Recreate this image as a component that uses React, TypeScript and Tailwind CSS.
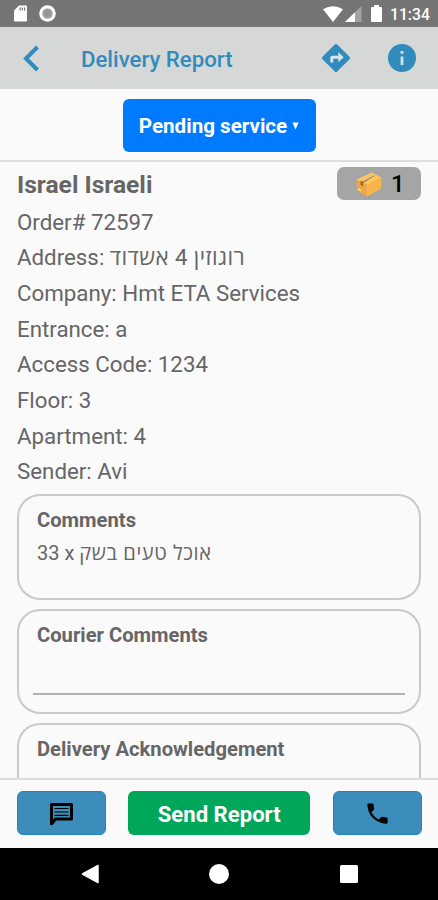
const rows = [
  { label: "Order#", value: "72597" },
  { label: "Address:", value: "רוגוזין 4 אשדוד", hebrew: true },
  { label: "Company:", value: "Hmt ETA Services" },
  { label: "Entrance:", value: "a" },
  { label: "Access Code:", value: "1234" },
  { label: "Floor:", value: "3" },
  { label: "Apartment:", value: "4" },
  { label: "Sender:", value: "Avi" },
];

function StatusBar() {
  return (
    <div className="flex h-[27px] shrink-0 items-center bg-[#757575] pr-[8px] pl-[14px] text-white">
      <svg width="13" height="17" viewBox="0 0 13 17">
        <path d="M5 0.5H12a1 1 0 0 1 1 1V15.500a1 1 0 0 1-1 1H1a1 1 0 0 1-1-1V5.500Z" fill="currentColor" />
        <path d="M5.500 2.500h1.200v3H5.500zM7.800 2.500H9v3H7.800zM10 2.500h1.200v3H10z" fill="#757575" />
      </svg>
      <svg className="ml-[12px]" width="17" height="17" viewBox="0 0 17 17">
        <circle cx="8.500" cy="8.500" r="8.300" fill="currentColor" />
        <circle cx="8.500" cy="8.500" r="5.300" fill="#a9a9a9" />
        <circle cx="8.500" cy="8.500" r="4" fill="#969696" />
      </svg>
      <svg className="ml-auto" width="20" height="16" viewBox="0 0 20 16">
        <path d="M0 3.300Q10-3 20 3.300L10 16Z" fill="currentColor" />
      </svg>
      <svg className="ml-[2px]" width="17" height="16" viewBox="0 0 17 16">
        <path d="M0 16L16.500 0V16Z" fill="#a3a3a3" />
        <path d="M0 16L10 6.300V16Z" fill="currentColor" />
      </svg>
      <svg className="ml-[9px]" width="11" height="17" viewBox="0 0 11 17">
        <path d="M3 0h5v2h2a1 1 0 0 1 1 1v13a1 1 0 0 1-1 1H1a1 1 0 0 1-1-1V3a1 1 0 0 1 1-1h2z" fill="currentColor" />
      </svg>
      <span className="mt-[2px] ml-[8px] w-[40px] text-[15.700px] leading-none font-medium whitespace-nowrap">11:34</span>
    </div>
  );
}

function Header() {
  return (
    <header className="flex h-[62px] shrink-0 items-center bg-[#d6d8d7] text-[#318bbd]">
      <svg className="ml-[23px]" width="17" height="27" viewBox="0 0 17 27" fill="none">
        <path d="M14.500 2L3 13.500L14.500 25" stroke="currentColor" strokeWidth="4" />
      </svg>
      <h1 className="mt-[4px] ml-[41px] text-[22.200px] font-medium">Delivery Report</h1>
      <svg className="mr-[38px] ml-auto" width="28" height="28" viewBox="0 0 28 28">
        <path d="M12.800 .5a1.700 1.700 0 0 1 2.400 0L27.500 12.800a1.700 1.700 0 0 1 0 2.400L15.200 27.500a1.700 1.700 0 0 1-2.400 0L.5 15.200a1.700 1.700 0 0 1 0-2.400Z" fill="currentColor" />
        <path d="M8.300 18.500v-5.200a1.500 1.500 0 0 1 1.500-1.500h6.500V8.200l5.400 5-5.400 5v-3.500h-5v3.800Z" fill="#d6e3e9" />
      </svg>
      <svg className="mr-[22px]" width="28" height="28" viewBox="0 0 28 28">
        <circle cx="14" cy="14" r="14" fill="currentColor" />
        <path d="M12.600 7h2.800v2.800h-2.800zM12.600 12.500h2.800v8.500h-2.800z" fill="#d6e3e9" />
      </svg>
    </header>
  );
}

function PackageIcon() {
  return (
    <svg width="26" height="25" viewBox="0 0 26 25">
      <path d="M.5 7.500L16 .5L25.500 5.500L10.500 12.800Z" fill="#ffc75a" />
      <path d="M.5 7.500L10.500 12.800L11 24.500L1 18.500Z" fill="#f2a63b" />
      <path d="M10.500 12.800L25.500 5.500L25 16.500L11 24.500Z" fill="#fbb448" />
      <path d="M4.500 9.500L16.500 3L18.500 4L7 11V14.500L4.500 13Z" fill="#9c682e" />
      <path d="M5 8.500L17.500 2L19.500 3L7 9.700Z" fill="#dec18b" />
      <path d="M2 16l3 1.600v1.600L2 17.500z" fill="#ffe0a0" />
    </svg>
  );
}

export default function App() {
  return (
    <div className="flex h-[900px] w-[438px] flex-col overflow-hidden bg-[#fafafa] font-[Roboto,'Open_Sans','Noto_Sans',sans-serif] text-[#666]">
      <StatusBar />
      <Header />
      <div className="flex h-[73px] shrink-0 items-center justify-center border-b-2 border-[#dcdedd]">
        <button className="mt-px flex h-[53px] w-[193px] items-center justify-center rounded-[6px] bg-[#007bff] pt-[2px] text-[20.600px] font-bold text-white">
          Pending service
          <svg className="ml-[5px]" width="7" height="8" viewBox="0 0 8 8">
            <path d="M.5 0h7L4 8z" fill="currentColor" />
          </svg>
        </button>
      </div>
      <main className="min-h-0 flex-1 overflow-hidden px-[17px]">
        <div className="flex h-[41.500px] justify-between pt-[5px]">
          <h2 className="mt-[3px] text-[24.600px] leading-[30px] font-bold">Israel Israeli</h2>
          <div className="flex h-[33px] w-[84px] items-center rounded-[7px] bg-[#a5a5a5] pt-px pl-[19px] text-[24px] font-medium text-black">
            <PackageIcon />
            <span className="ml-[9px]">1</span>
          </div>
        </div>
        {rows.map((row) => (
          <p key={row.label} className="h-[35.700px] text-[22.300px] leading-[36px] whitespace-nowrap">
            {row.label} <span className={row.hebrew ? "tracking-[0.420px]" : ""}>{row.value}</span>
          </p>
        ))}
        <section className="mt-[4.500px] h-[106px] rounded-[23px] border-2 border-[#c9c9c9] px-[18px] pt-[11px]">
          <h3 className="text-[20.200px] leading-[26px] font-bold">Comments</h3>
          <p className="mt-[7px] text-[20px] leading-[26px]">
            33 x <span className="tracking-[0.620px]">אוכל טעים בשק</span>
          </p>
        </section>
        <section className="mt-[9px] h-[105px] rounded-[23px] border-2 border-[#c9c9c9] px-[14px] pt-[11px]">
          <h3 className="px-[4px] text-[20.200px] leading-[26px] font-bold">Courier Comments</h3>
          <div className="mt-[45px] h-[2px] bg-[#b1b1b1]" />
        </section>
        <section className="mt-[9px] h-[106px] rounded-[23px] border-2 border-[#c9c9c9] px-[18px] pt-[11px]">
          <h3 className="text-[20.200px] leading-[26px] font-bold">Delivery Acknowledgement</h3>
        </section>
      </main>
      <footer className="flex h-[70px] shrink-0 justify-between border-t-2 border-[#dddddd] pr-[16.500px] pl-[17px] pt-[11px]">
        <button className="flex h-[44px] w-[89px] items-center justify-center rounded-[6px] border border-[#2085bb] bg-[#3c8dbc] text-black">
          <svg width="23" height="23" viewBox="0 0 23 23">
            <path d="M1.500 22V2.500H21.500V17H5.500Z" fill="none" stroke="currentColor" strokeWidth="3" strokeLinejoin="round" />
            <path d="M4.500 6.500H18.500M4.500 10H18.500M4.500 13.300H18.500" stroke="currentColor" strokeWidth="1.200" />
          </svg>
        </button>
        <button className="h-[44px] w-[182px] rounded-[6px] bg-[#00a65a] pt-[3px] text-[22.100px] font-bold text-white">Send Report</button>
        <button className="flex h-[44px] w-[89px] items-center justify-center rounded-[6px] border border-[#2085bb] bg-[#3c8dbc] text-black">
          <svg width="27" height="27" viewBox="0 0 24 24" fill="currentColor">
            <path d="M6.620 10.790c1.440 2.830 3.760 5.140 6.590 6.590l2.200-2.200c.27-.27.67-.36 1.020-.24 1.120.37 2.330.57 3.570.57.55 0 1 .45 1 1V20c0 .55-.45 1-1 1-9.390 0-17-7.610-17-17 0-.55.45-1 1-1h3.500c.55 0 1 .45 1 1 0 1.250.2 2.450.57 3.570.11.35.03.74-.25 1.020l-2.200 2.200z" />
          </svg>
        </button>
      </footer>
      <nav className="flex h-[52px] shrink-0 items-center bg-black text-white">
        <svg className="ml-[80.500px]" width="18" height="20" viewBox="0 0 18 20">
          <path d="M17 1.500V18.500L1.500 10Z" fill="currentColor" stroke="currentColor" strokeWidth="1.500" strokeLinejoin="round" />
        </svg>
        <div className="ml-[110.500px] size-[20px] rounded-full bg-white" />
        <div className="ml-[111px] size-[18px] rounded-[1.500px] bg-white" />
      </nav>
    </div>
  );
}
